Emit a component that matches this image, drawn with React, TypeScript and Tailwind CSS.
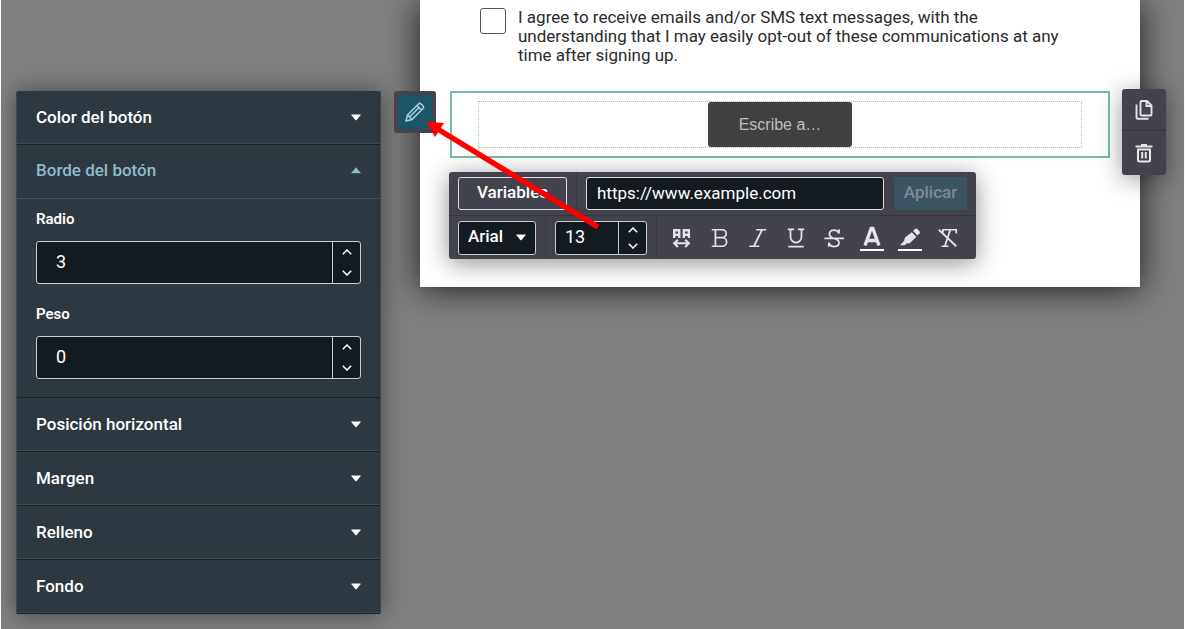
import type { ReactNode } from "react";

const sectionsBelow = ["Posición horizontal", "Margen", "Relleno", "Fondo"];

const textTools: { name: string; icon: ReactNode }[] = [
  {
    name: "Espaciado",
    icon: (
      <g strokeWidth="2.6">
        <path d="M3.5 12V3.5H9V12M3.5 8.500H9M14 12V3.5h5.5V12M14 8.500h5.5" />
        <path d="M3.5 17.800h16M7.5 13.800l-4 4 4 4M15.5 13.800l4 4-4 4" strokeWidth="2.3" />
      </g>
    ),
  },
  {
    name: "Negrita",
    icon: <path d="M3 3h11.500a4.300 4.300 0 0 1 0 8.600H7M14.500 11.600a4.700 4.700 0 0 1 0 9.400H3M7 3v18" />,
  },
  { name: "Cursiva", icon: <path d="M10 3h11M2.500 21h11M16.500 3l-9 18" /> },
  {
    name: "Subrayado",
    icon: <path d="M3 2.500h7M14 2.500h7M6 2.500v8.500a6 6 0 0 0 12 0V2.500M3.500 21.500h17" />,
  },
  {
    name: "Tachado",
    icon: (
      <path d="M1.500 12.500h21.500M17.500 7V2.500M17.500 7C16.500 4.500 14.500 3.300 12.300 3.300 9 3.300 7 5 7 7.500c0 2.300 1.500 3.700 5 5 4 1.200 5.500 2.500 5.500 4.800 0 2.500-2.200 4-5.200 4s-5-1.500-6-4M6.300 17v4.500" />
    ),
  },
];

function Caret({ up = false }: { up?: boolean }) {
  return (
    <svg viewBox="0 0 10 7" className="h-[7px] w-2.5" fill="currentColor" aria-hidden="true">
      {up ? <path d="M5 .3 10 6.200H0z" /> : <path d="M.8.500h8.400q.8 0 .3.700L5.600 6q-.6.700-1.200 0L.5 1.200Q0 .500.800.500z" />}
    </svg>
  );
}

function Stepper({ label }: { label: string }) {
  return (
    <div className="flex w-7 shrink-0 flex-col border-l border-[#c9cdd0] text-white">
      <button type="button" aria-label={`Aumentar ${label}`} className="flex flex-1 items-center justify-center">
        <svg viewBox="0 0 10 6" className="h-1.5 w-2.5" fill="none" stroke="currentColor" strokeWidth="1.5">
          <path d="M.8 5.200 5 1l4.200 4.200" />
        </svg>
      </button>
      <button type="button" aria-label={`Reducir ${label}`} className="flex flex-1 items-center justify-center">
        <svg viewBox="0 0 10 6" className="h-1.5 w-2.5" fill="none" stroke="currentColor" strokeWidth="1.5">
          <path d="M.8.800 5 5 9.200.800" />
        </svg>
      </button>
    </div>
  );
}

function NumberField({ id, label, value }: { id: string; label: string; value: number }) {
  return (
    <div>
      <label htmlFor={id} className="block text-[15px] leading-5 font-semibold">
        {label}
      </label>
      <div className="mt-3 flex h-[43px] rounded-[3px] border border-[#c9cdd0] bg-[#141b20]">
        <input
          id={id}
          type="number"
          defaultValue={value}
          className="min-w-0 flex-1 appearance-none bg-transparent px-[19px] pb-0.5 text-lg outline-none [-moz-appearance:textfield] [&::-webkit-inner-spin-button]:appearance-none"
        />
        <Stepper label={label} />
      </div>
    </div>
  );
}

function SectionHeader({ title, open = false }: { title: string; open?: boolean }) {
  return (
    <h2>
      <button
        type="button"
        aria-expanded={open}
        className={
          open
            ? "flex h-[54px] w-full items-center justify-between border-b border-[#45525a] px-[19px] pb-0.5 text-[17px] font-medium text-[#8fbccb]"
            : "flex h-[54px] w-full items-center justify-between border-b border-[#172126] px-[19px] text-[17px] font-medium text-white shadow-[inset_0_-1px_0_#3d4a51]"
        }
      >
        {title}
        <Caret up={open} />
      </button>
    </h2>
  );
}

function Sidebar() {
  return (
    <aside className="mt-[91px] w-[365px] shrink-0 self-start rounded-xs border-x border-[#3b484f] bg-[#2d3840] text-white shadow-[0_0_24px_rgba(0,0,0,0.45)]">
      <SectionHeader title="Color del botón" />
      <SectionHeader title="Borde del botón" open />
      <div className="flex flex-col gap-5 border-b border-[#172126] px-[19px] pt-2.5 pb-[18px]">
        <NumberField id="radio" label="Radio" value={3} />
        <NumberField id="peso" label="Peso" value={0} />
      </div>
      {sectionsBelow.map((title) => (
        <SectionHeader key={title} title={title} />
      ))}
    </aside>
  );
}

function Toolbar() {
  return (
    <div className="relative mt-3.5 -ml-px w-fit rounded-[3px] bg-[#42434d] text-white shadow-[0_4px_24px_rgba(0,0,0,0.45)]">
      {/* Link row */}
      <div className="flex h-11 items-center border-b border-[#34353e] px-[9px]">
        <button type="button" className="h-[33px] w-[109px] rounded-[3px] border border-[#dcdde0] pb-0.5 text-[17px] font-medium">
          Variables
        </button>
        <span className="mx-[9px] h-full w-px bg-[#393a43]" />
        <input
          type="url"
          aria-label="Enlace"
          defaultValue="https://www.example.com"
          className="h-[33px] w-[298px] rounded-[3px] border border-[#dcdde0] bg-[#141b20] px-2.5 pb-0.5 text-[17px] outline-none"
        />
        <button type="button" className="ml-2.5 h-[33px] w-[73px] rounded-xs bg-[#3c5461] pb-0.5 text-[17px] font-medium text-[#7e8994]">
          Aplicar
        </button>
      </div>

      {/* Text row */}
      <div className="flex h-[43px] items-center px-[9px]">
        <div className="relative">
          <select
            aria-label="Fuente"
            className="h-[34px] w-[78px] appearance-none rounded-[3px] border border-[#c9cdd0] bg-[#141b20] px-[9px] pb-0.5 text-[17px] font-medium outline-none"
          >
            <option>Arial</option>
          </select>
          <span className="pointer-events-none absolute inset-y-0 right-2.5 flex items-center">
            <Caret />
          </span>
        </div>
        <span className="mx-[9px] h-full w-px bg-[#393a43]" />
        <div className="flex h-[34px] w-[92px] rounded-[3px] border border-[#c9cdd0] bg-[#141b20]">
          <input
            type="number"
            aria-label="Tamaño"
            defaultValue={13}
            className="min-w-0 flex-1 appearance-none bg-transparent px-[9px] pb-0.5 text-lg outline-none [-moz-appearance:textfield] [&::-webkit-inner-spin-button]:appearance-none"
          />
          <Stepper label="Tamaño" />
        </div>
        <span className="mr-1.5 ml-[9px] h-full w-px bg-[#393a43]" />
        <div className="flex flex-1 items-center text-[#e3e4e8]">
          {textTools.map((tool) => (
            <button key={tool.name} type="button" aria-label={tool.name} className="flex flex-1 justify-center">
              <svg viewBox="0 0 24 24" className="size-[22px]" fill="none" stroke="currentColor" strokeWidth="1.9">
                {tool.icon}
              </svg>
            </button>
          ))}
          <button type="button" aria-label="Color del texto" className="flex flex-1 justify-center">
            <svg viewBox="0 0 26 26" className="size-[26px]" fill="none" stroke="currentColor">
              <path d="M6 20.500 12.200 3.500h1.600L20 20.500M8.500 15.500h9" strokeWidth="3.400" />
              <path d="M1 25h24" stroke="white" strokeWidth="2" />
            </svg>
          </button>
          <button type="button" aria-label="Color de resaltado" className="flex flex-1 justify-center">
            <svg viewBox="0 0 26 26" className="size-[26px]" fill="currentColor">
              <path d="M16 6 18 4q1.200-1 2.300 0L22.500 6.200q1 1.200 0 2.300L20.500 10.500zM14.800 7.200l4.500 4.500-6.500 6.500-3.300.3-1.700 1.700H3l4.200-4.500.6-3z" />
              <path d="M1 24h24v2H1z" fill="white" />
            </svg>
          </button>
          <button type="button" aria-label="Quitar formato" className="flex flex-1 justify-center">
            <svg viewBox="0 0 24 24" className="size-[22px]" fill="none" stroke="currentColor" strokeWidth="1.900">
              <path d="M6.500 6V3h14.500v4M14.500 3 8.500 21M5 21h7.500M2 3l19 18" />
            </svg>
          </button>
        </div>
      </div>
    </div>
  );
}

function BlockActions() {
  return (
    <div className="absolute -top-1 -right-[58px] flex w-11 flex-col rounded-[3px] bg-[#42434d] text-[#e3e4e8] shadow-[0_4px_24px_rgba(0,0,0,0.4)]">
      <button type="button" aria-label="Duplicar" className="flex h-[42px] items-center justify-center border-b border-[#34353e]">
        <svg viewBox="0 0 20 22" className="h-[22px] w-5" fill="none" stroke="currentColor" strokeWidth="1.900">
          <path d="M6.500 3q0-1 1-1H13l4.500 4.500v9q0 1-1 1h-9q-1 0-1-1zM12.500 2v5h5M2.500 5.500v13.200q0 1 1 1h11" />
        </svg>
      </button>
      <button type="button" aria-label="Eliminar" className="flex h-11 items-center justify-center">
        <svg viewBox="0 0 18 20" className="h-5 w-[18px]" fill="none" stroke="currentColor" strokeWidth="2">
          <path d="M.5 3.500h17M6 2h6" />
          <path d="M3 6.500h12V17q0 1.500-1.500 1.500h-9Q3 18.500 3 17zM7.200 9v6.500M10.800 9v6.500" />
        </svg>
      </button>
    </div>
  );
}

export default function App() {
  return (
    <main className="flex min-h-screen gap-[39px] border-x border-white bg-[#808080] pr-11 pl-[15px] font-[Roboto,sans-serif]">
      <Sidebar />

      <section className="min-w-0 flex-1 self-start bg-white px-[30px] pb-7 shadow-[0_2px_32px_rgba(0,0,0,0.8)]">
        <label className="flex h-[91px] gap-3 pt-2 pr-10 pl-[30px] text-[17px] leading-[19px] text-[#2b2b2b]">
          <input type="checkbox" className="size-[26px] shrink-0 appearance-none rounded-[3px] border border-[#555]" />
          <span>
            I agree to receive emails and/or SMS text messages, with the understanding that I may easily opt-out of these
            communications at any time after signing up.
          </span>
        </label>

        {/* Selected block */}
        <div className="relative border-2 border-[#76bda7] px-[26px] py-2">
          <div className="flex justify-center border border-dotted border-[#8fc7b6]">
            <button
              type="button"
              className="h-[45px] w-36 rounded-[3px] bg-[#414141] font-[Liberation_Sans,sans-serif] text-base text-[#bfbfbf]"
            >
              Escribe a…
            </button>
          </div>

          <button
            type="button"
            aria-label="Editar"
            className="absolute -top-0.5 -left-[58px] flex size-[42px] items-center justify-center rounded-[3px] border-4 border-[#42434d] bg-[#1a5665] text-[#a9cfd8]"
          >
            <svg viewBox="0 0 20 20" className="size-5" fill="none" stroke="currentColor" strokeWidth="1.500">
              <path d="M1 19 2.500 13 13.500 2q1.300-1.200 2.600 0l1.900 1.900q1.200 1.300 0 2.600L7 17.500zM12 3.500 16.500 8M2.500 13 7 17.500M5 14.500l9-9" />
            </svg>
          </button>
          <BlockActions />

          <svg viewBox="0 0 174 110" className="pointer-events-none absolute top-[27px] -left-[26px] z-10 h-[110px] w-[174px]" aria-hidden="true">
            <path d="M10 8 172 107" stroke="#ff0000" strokeWidth="5.500" />
            <path d="M0 1.500 18 3 9 17z" fill="#ff0000" />
          </svg>
        </div>

        <Toolbar />
      </section>
    </main>
  );
}
